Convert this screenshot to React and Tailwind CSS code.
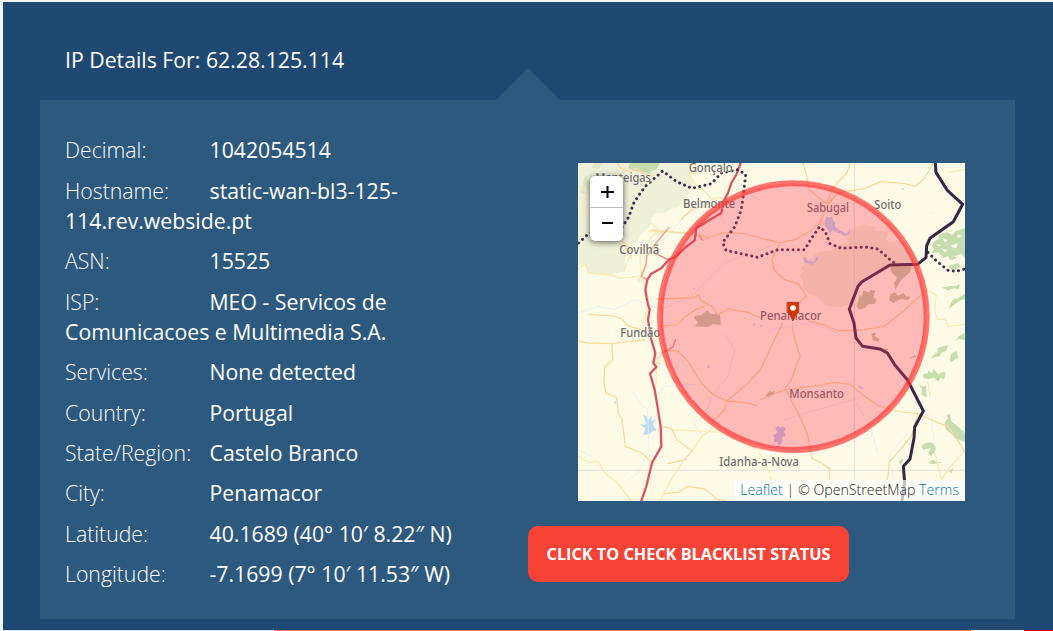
import React from "react";

const details = [
  ["Decimal:", "1042054514"],
  ["Hostname:", "static-wan-bl3-125-114.rev.webside.pt"],
  ["ASN:", "15525"],
  ["ISP:", "MEO - Servicos de Comunicacoes e Multimedia S.A."],
  ["Services:", "None detected"],
  ["Country:", "Portugal"],
  ["State/Region:", "Castelo Branco"],
  ["City:", "Penamacor"],
  ["Latitude:", "40.1689 (40° 10′ 8.22″ N)"],
  ["Longitude:", "-7.1699 (7° 10′ 11.53″ W)"],
];

// name, left x, baseline y, width (in map units, three per pixel)
const places = [
  ["Manteigas", 52, 57, 167],
  ["Gonçalo", 332, 26, 132],
  ["Belmonte", 315, 135, 157],
  ["Covilhã", 124, 273, 120],
  ["Fundão", 127, 523, 120],
  ["Penamacor", 546, 472, 185],
  ["Sabugal", 687, 147, 126],
  ["Soito", 889, 137, 81],
  ["Monsanto", 634, 705, 164],
  ["Idanha-a-Nova", 424, 908, 239],
];

function MapDrawing() {
  return (
    <svg className="block h-full w-full" viewBox="0 0 1161 1014" fill="none" strokeLinecap="round" strokeLinejoin="round">
      <rect width="1161" height="1014" fill="#fdfbe6" />

      {/* parkland */}
      <path fill="#eef0d8" d="M0 0H330L332 30 345 60 333 90 320 112 300 132 280 138 262 150 240 150 218 164 220 182 205 200 188 214 180 232 160 244 158 262 142 278 140 325 100 332 30 330 22 300 0 305Z" />
      <path fill="#c6dcae" d="M156 0H245L236 18 222 24 215 34 200 28 180 26 150 16Z" />
      <path fill="#dfe7c6" d="M48 0 75 0 62 18 40 14ZM20 40 40 60 28 95 8 90Z" />
      <path fill="#edf0d6" d="M812 206 830 192 842 188 860 184 874 190 890 190 892 205 928 203 930 218 924 232 936 236 960 236 980 240 1000 256 1010 268 1018 304 940 310 900 335 860 352 845 365 835 400 826 428 806 426 786 433 764 430 740 426 720 404 700 395 672 378 676 354 664 340 676 326 670 315 690 290 725 266 760 262 790 244 812 244 808 226Z" />
      <g fill="#c3cba4">
        <path d="M350 458 372 455 388 442 398 452 426 454 428 486 404 484 388 492 350 490 360 478 348 466Z" />
        <path d="M836 430 845 395 852 402 856 382 872 388 880 380 892 384 886 402 896 410 890 422 870 424 862 434 844 440Z" />
        <path d="M936 310 1002 308 996 328 970 350 952 380 948 360 958 344 940 328ZM936 395 950 388 960 398 976 390 984 400 998 402 990 412 970 408 945 420 934 412ZM880 512 895 508 890 520 905 528 902 536 885 532ZM900 555 930 558 918 574 912 562 898 562ZM994 588 1010 576 1020 578Z" />
        <path d="M562 698 575 684 584 688 588 682 590 692 570 704Z" />
      </g>
      <g fill="#c7ddb0">
        <path d="M1070 235 1082 228 1080 218 1095 210 1110 208 1122 216 1134 204 1161 195V285L1150 272 1130 280 1138 286 1118 292 1110 280 1095 286 1090 276 1080 268 1062 270 1068 255 1060 248Z" />
        <path d="M1110 310 1140 300 1150 310 1125 324ZM1092 374 1120 368 1130 370 1145 364 1142 378 1128 376 1110 382ZM1112 438 1118 422 1125 410 1140 406 1161 392V408L1148 412 1140 416 1130 424Z" />
        <path d="M1055 587 1070 574 1080 566 1078 558 1085 553 1110 546 1105 564 1092 568 1085 580 1072 582ZM1115 592 1120 572 1135 564 1142 584 1130 590 1120 598ZM1130 535 1142 520 1160 510V532L1140 528ZM1035 634 1050 630 1050 622 1060 632 1068 618 1080 634 1092 628 1104 628 1098 648 1088 644 1080 656 1068 644 1050 648 1036 644ZM1020 660 1030 670 1044 670 1046 704 1036 698 1030 696 1032 680Z" />
        <path d="M1100 780 1110 764 1106 758 1115 752 1120 775 1134 786 1161 810V838L1130 825 1120 812 1104 800ZM1030 850 1042 840 1060 838 1074 850 1070 866 1058 880 1050 870 1060 854 1036 860ZM1050 900 1064 890 1074 896 1094 898 1066 904ZM1110 925 1125 915 1122 930ZM962 898 972 886 976 894 968 906Z" />
      </g>
      <g fill="#f7f6e2">
        <path d="M1092 224 1110 232 1100 238ZM1118 248 1140 240 1135 256 1124 254ZM1088 256 1110 262 1100 268ZM1074 244 1092 246 1080 250ZM1140 214 1152 220 1136 226Z" />
      </g>

      {/* water */}
      <g fill="#bcdcf5">
        <path d="M196 755 208 762 210 772 222 758 220 774 234 768 224 784 236 800 218 808 214 814 196 816 202 796 184 784 200 786 204 782Z" />
        <path fill="#bdd6f2" d="M740 170 746 160 754 164 762 160 765 172 772 180 770 190 780 198 794 206 802 212 812 206 818 192 814 212 800 220 788 212 770 206 764 200 756 214 750 200 740 188ZM674 284 682 282 692 294 706 296 716 282 724 280 714 298 700 306 690 300 680 300Z" />
        <path fill="#bccbea" d="M592 795 602 788 608 794 614 790 622 796 618 806 622 820 612 822 614 838 602 850 598 838 586 836 590 824 584 818 598 810Z" />
        <path d="M106 720 114 712 112 724ZM968 78 980 74 975 82Z" />
        <path fill="#cddcf0" d="M838 662 862 680 844 676ZM344 378 352 374 348 382ZM390 604 396 614 388 616ZM524 484 532 480 530 490ZM546 488 554 486 550 494Z" />
      </g>
      <g stroke="#eaf1ee" strokeWidth="3">
        <path d="M0 50 20 70 36 130 110 170 170 240 260 230 320 160 400 115 440 180M30 130 90 160 120 210M0 450 60 430 110 440 170 410 250 440 340 400 440 300 576 250M166 688 182 716 208 740 214 860 180 930 150 950M244 690 260 670 350 664M440 510 470 560 450 640 400 700 380 760 346 780 370 812M0 860 40 880M576 500 700 480 790 515M620 770 700 745 790 720 860 700M950 960 930 880 990 810M1000 710 1060 760 1070 850M836 720 880 800 900 870" />
      </g>
      <path stroke="#d9deda" strokeWidth="2.5" d="M829 0V1014M0 922H1161" />

      {/* minor roads */}
      <g stroke="#fbeab8" strokeWidth="4">
        <path d="M0 70 16 76 28 100 10 130 20 160M332 30 350 62 374 78 400 108 430 104 465 125M350 0 360 30 330 34M138 325 150 292 160 258M0 318 22 302 32 330 100 336 126 346 190 338M222 182 240 200 196 250 186 280 190 340M212 204 262 208 232 214M204 300 190 340 210 400 200 470 180 510M0 880 32 898 62 896 78 928 118 960 160 1014M245 1014 280 950 312 900 340 866 372 820 400 800 404 770M280 800 440 808 540 860 560 900 576 930M576 940 600 1014M1056 385 1074 396 1070 440 1078 470 1100 468 1110 490 1161 484M1161 863 1110 920 1084 960M1050 660 1056 700M236 590 234 660M1070 870 1090 950M1110 28 1161 20" />
      </g>
      <g stroke="#fbd9a0" strokeWidth="4">
        <path d="M118 0 126 14 156 28 174 16 200 34 228 38M308 170 340 140 380 128 415 112M222 200 245 204 340 212 365 216 390 224 440 208 500 212 560 228 606 240 650 230 684 212 714 188M130 234 150 250 160 286" />
        <path d="M675 0 684 30 694 80 730 110 750 124 780 90 860 76 910 56 980 62 1012 70 1040 45 1066 0M818 0 806 30 760 80 728 184M728 170 720 190M770 100 740 130" />
        <path d="M32 455 100 458 130 466 148 488 190 500M235 408 350 404 360 396 370 412 400 430 420 455 450 438 510 448 546 464M250 490 300 484 320 462 360 436 380 430M0 534 30 540 102 542 200 530M102 542 104 590 80 612 78 660 84 690 116 704 120 750 132 770 142 850 190 870 222 896M255 792 280 796 296 830 342 864 320 890 270 902M260 992 300 988 330 970 380 978 420 1010 445 1014" />
        <path d="M240 586 260 562 300 564 330 594 370 660 404 694 446 714 500 718 536 728M614 480 580 550 548 620 510 660 446 714 440 740 402 776M548 710 576 698 622 680 720 668 766 658 816 664 860 700 900 728 960 746 1020 752 1076 778 1110 790 1161 866M644 480 645 510 666 580 640 650 622 676 644 720 670 770 690 820 702 886 730 900 754 916 755 965M606 240 582 290 588 320 620 350 660 362 686 400 650 430 642 460M690 474 740 486 780 504 860 500 920 490 980 440 1048 380M1020 752 1000 820 950 880 934 896 930 940 910 990" />
      </g>
      <g stroke="#eba283" strokeWidth="4.5">
        <path d="M272 194 230 245 206 280 204 306 190 340 204 348M252 570 285 552 292 530M365 218 374 232" />
        <path stroke="#e58484" d="M230 270 270 290" />
      </g>
      <g fill="#f2ddc6" opacity=".5">
        <path d="M260 192 280 190 274 205ZM175 347 194 338 200 352 182 362ZM234 576 252 590 248 610 236 600ZM385 218 400 226 380 232ZM720 174 742 178 728 190ZM1052 150 1064 148 1060 152Z" />
      </g>

      {/* motorway */}
      <path stroke="#db5560" strokeWidth="7" d="M488 0 475 35 460 60 450 90 438 112 430 150 355 195 350 232 320 255 295 280 272 290 250 316 220 332 208 350 202 380 206 405 210 424 215 440 210 470 215 500 220 530 232 570 226 600 235 612 216 632 230 680 240 740 248 790 250 850 222 900 205 970 190 1014" />

      {/* boundaries */}
      <g stroke="#44304f">
        <path strokeWidth="9" strokeDasharray="0.1 16" d="M2 240 32 212 80 200 130 196 152 162 168 118 200 72 254 24 296 56 342 76 400 62 430 30 480 20 503 35 498 80 490 140 470 192 434 238 444 262 538 283 600 260 680 260 698 230 724 192 742 206 756 242 790 256 860 252 900 258 936 290 952 302" />
        <path strokeWidth="9" strokeDasharray="0.1 16" d="M1050 268 1078 296 1110 322 1135 325 1161 318" />
        <path stroke="#352747" strokeWidth="9" d="M1072 0 1074 28 1108 82 1154 124 1126 176 1056 226 1046 248 1044 284 1018 304 936 306 852 356 840 370 814 438 828 480 834 525 854 550 906 558 928 570 950 605 988 650 1036 744 1010 792 1008 826 996 888 976 910 980 960 972 1014" />
      </g>

      <g fill="#6d6b69" stroke="#fffdf0" strokeOpacity=".6" strokeWidth="4" fontSize="35" fontWeight="500" fontFamily='"Noto Sans", "Open Sans", sans-serif' style={{ paintOrder: "stroke" }}>
        {places.map(([name, x, y, width]) => (
          <text key={name} x={x} y={y} textLength={width} lengthAdjust="spacingAndGlyphs">{name}</text>
        ))}
      </g>

      {/* accuracy radius */}
      <circle cx="646" cy="461" r="400" fill="#ff3350" fillOpacity=".32" />
      <circle cx="646" cy="461" r="400" stroke="#ff3333" strokeOpacity=".68" strokeWidth="18" />

      {/* marker */}
      <path fill="#d63300" stroke="#a82b0c" strokeWidth="2" d="M628 418H662V448L655 454 645 474 635 454 628 448Z" />
      <circle cx="645" cy="435" r="8.5" fill="#fff" />
    </svg>
  );
}

export default function App() {
  return (
    <div className="flex h-[631px] w-[1053px] flex-col overflow-hidden bg-[#f3f7fa] pl-[3px] pt-[2px] font-['Open_Sans',sans-serif] text-white">
      <main className="flex h-[628px] shrink-0 flex-col bg-[#1f4972] pl-[37px] pr-[38px]">
        <h1 className="h-[98px] shrink-0 pl-[25px] pt-[43px] text-[21.26px] leading-[30px]">IP Details For: 62.28.125.114</h1>
        <section className="relative flex h-[519px] bg-[#2d597f] pl-[25px]">
          <svg className="absolute -top-8 left-[456px] h-8 w-16" viewBox="0 0 64 32">
            <path d="M0 32 32 0 64 32Z" fill="#2d597f" />
          </svg>
          <div className="w-[463px] pt-[35.25px] text-[21.26px] leading-[30.3px]">
            {details.map(([label, value]) => (
              <p key={label} className="mb-[10.08px] w-[400px]">
                <span className="inline-block w-[144.5px] font-light">{label}</span>
                {label === "Hostname:" ? (
                  <span>static-wan-bl3-125-<br />114.rev.webside.pt</span>
                ) : label === "ISP:" ? (
                  <span>MEO - Servicos de<br />Comunicacoes e Multimedia S.A.</span>
                ) : (
                  <span>{value}</span>
                )}
              </p>
            ))}
          </div>
          <div className="flex flex-col items-start pt-[63px]">
            <div className="relative ml-[50px] h-[338px] w-[387px] overflow-hidden">
              <MapDrawing />
              <div className="absolute left-[12px] top-[13px] flex w-[33px] flex-col overflow-hidden rounded-[5px] bg-white shadow-[0_1px_6px_rgba(0,0,0,0.65)]">
                <button className="flex h-[32px] items-center justify-center border-b border-[#bbb]" aria-label="Zoom in">
                  <svg className="ml-px h-3 w-[13px]" viewBox="0 0 13 12" stroke="#000" strokeWidth="2"><path d="M0 6H13M6.5 0V12" /></svg>
                </button>
                <button className="flex h-[33px] items-center justify-center pb-[3px]" aria-label="Zoom out">
                  <svg className="ml-px h-[2px] w-[11px]" viewBox="0 0 11 2"><path d="M0 0H11V2H0Z" /></svg>
                </button>
              </div>
              <div className="absolute bottom-0 right-0 h-[21px] whitespace-nowrap bg-white/70 px-[6px] text-[14.2px] font-light leading-[20px] text-[#222]">
                <a className="text-[#0078a8]">Leaflet</a> | © OpenStreetMap <a className="text-[#0078a8]">Terms</a>
              </div>
            </div>
            <button className="mt-[25px] h-[56px] w-[321px] rounded-[10px] bg-[#f74336] text-[16.25px] font-bold">CLICK TO CHECK BLACKLIST STATUS</button>
          </div>
        </section>
      </main>
      <div className="flex h-px">
        <div className="w-[271px] bg-[#dce5f1]" />
        <div className="w-[697px] bg-[#f87a6e]" />
        <div className="w-[53px]" />
        <div className="flex-1 bg-[#d9001b]" />
      </div>
    </div>
  );
}
